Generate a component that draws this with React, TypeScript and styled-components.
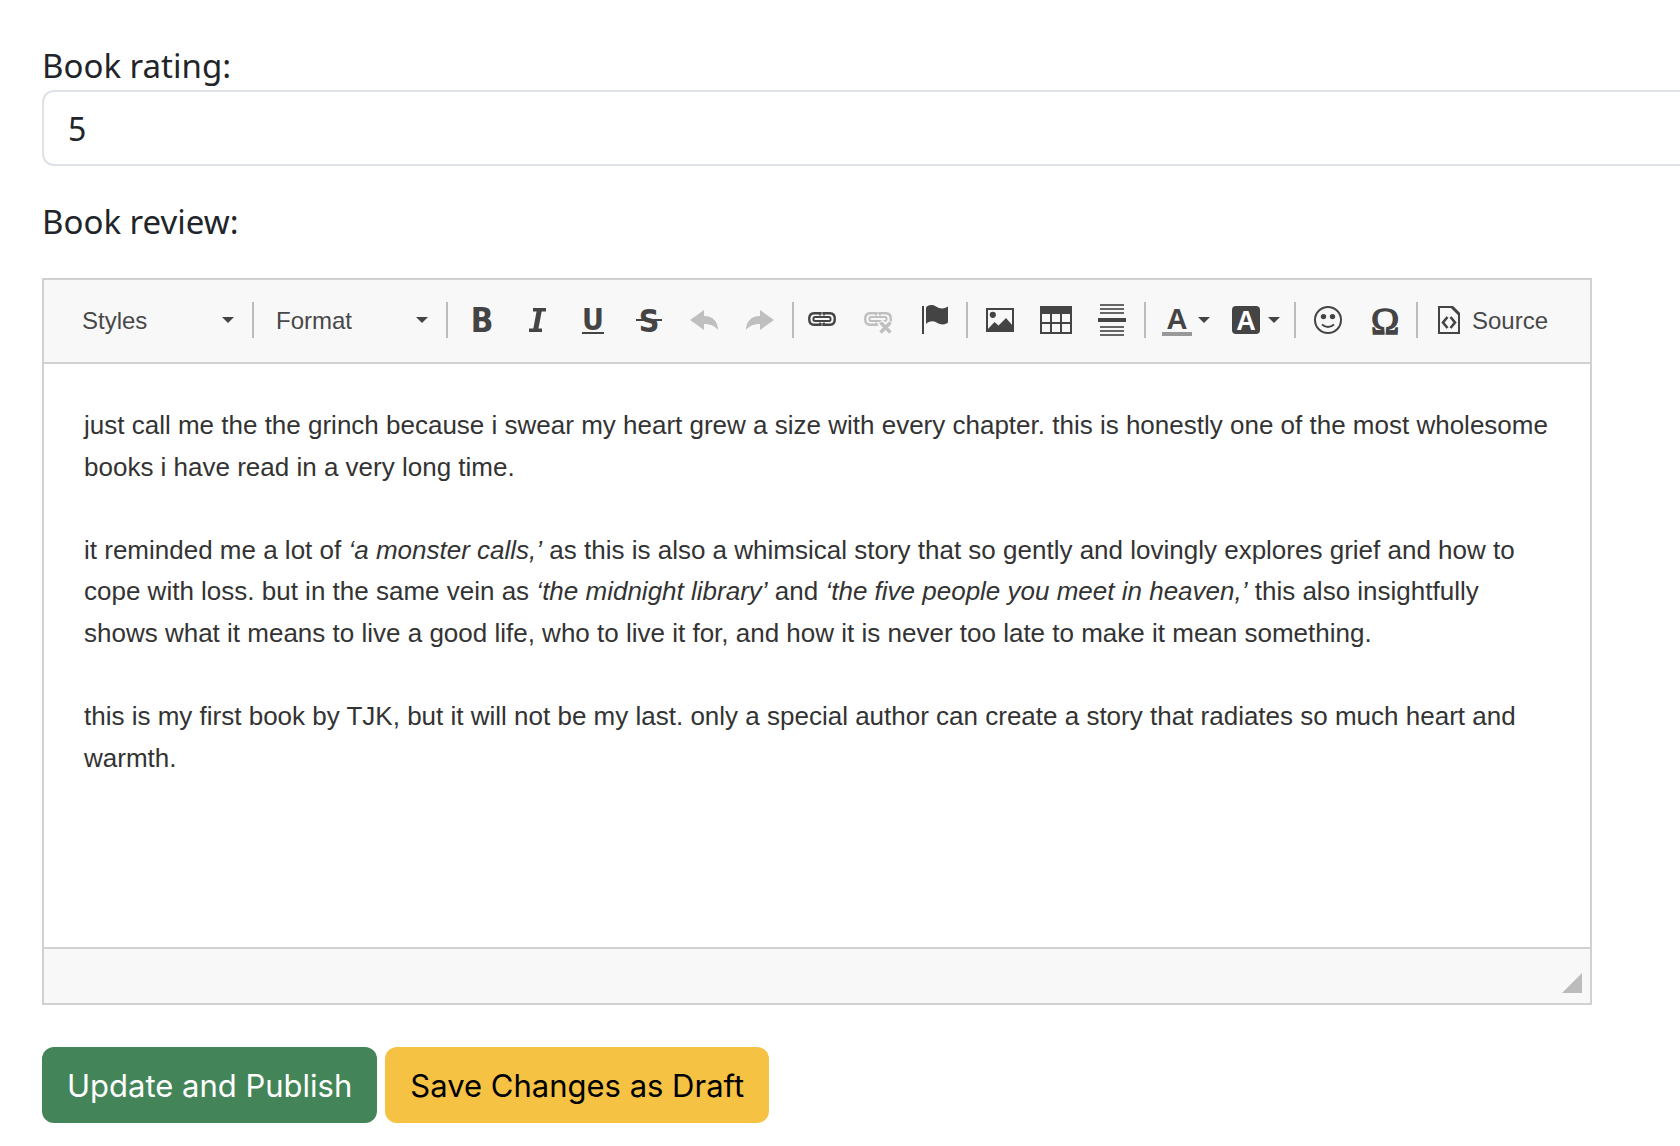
import React from 'react';
import styled, { createGlobalStyle } from 'styled-components';

const INK = '#444444';
const BAR = '#f8f8f8';
const LINE = '#d1d1d1';

const GlobalStyle = createGlobalStyle`
  * { box-sizing: border-box; }
  body { margin: 0; background: #ffffff; overflow-x: hidden; }
`;

const Page = styled.form`
  display: flex;
  flex-direction: column;
  padding: 42px 88px 24px 42px;
  color: #212529;
  font-family: 'Noto Sans', 'Open Sans', sans-serif;
  font-size: 32px;
`;

const Field = styled.div`
  display: flex;
  flex-direction: column;
  margin: 0 -112px 32px 0;
`;

const Label = styled.label`
  font-size: 33px;
  line-height: 48px;
`;

const TextInput = styled.input`
  height: 76px;
  padding: 12px 24px;
  border: 2px solid #dee2e6;
  border-radius: 12px;
  background: #ffffff;
  color: inherit;
  font: inherit;
  outline: none;
`;

const Editor = styled.section`
  display: flex;
  flex-direction: column;
  margin: 32px 0 42px;
  border: 2px solid ${LINE};
  font-family: 'Liberation Sans', Arial, sans-serif;
`;

const Toolbar = styled.div`
  display: flex;
  flex-wrap: wrap;
  align-items: center;
  padding: 12px 16px 14px;
  background: ${BAR};
  border-bottom: 2px solid ${LINE};
`;

const Separator = styled.span<{ $before?: number; $after?: number }>`
  width: 2px;
  height: 36px;
  margin-left: ${({ $before = 4 }) => $before}px;
  margin-right: ${({ $after = 4 }) => $after}px;
  background: #bcbcbc;
`;

const Combo = styled.div`
  display: grid;
  grid-template-columns: 1fr auto;
  align-items: center;
  width: 192px;
  padding-right: 18px;
`;

const ComboSelect = styled.select`
  grid-area: 1 / 1 / 2 / 3;
  height: 56px;
  padding: 0 0 0 22px;
  appearance: none;
  border: 0;
  background: transparent;
  color: #484848;
  font: 24px 'Liberation Sans', Arial, sans-serif;
  outline: none;
`;

const CaretSvg = styled.svg`
  grid-area: 1 / 2;
  width: 12px;
  height: 6px;
  flex: none;
  fill: ${INK};
  pointer-events: none;
`;

const ToolButton = styled.button<{ $menu?: boolean }>`
  display: flex;
  align-items: center;
  gap: 4px;
  height: 56px;
  padding: 0 ${({ $menu }) => ($menu ? 10 : 12)}px 0 12px;
  border: 0;
  background: transparent;
  color: #484848;
  font: 24px 'Liberation Sans', Arial, sans-serif;
`;

const Caption = styled.span`
  padding: 2px 0 0 2px;
`;

const Icon = styled.svg<{ $faded?: boolean }>`
  width: 32px;
  height: 32px;
  flex: none;
  overflow: visible;
  color: ${({ $faded }) => ($faded ? '#bfbfbf' : INK)};
`;

const Content = styled.div`
  min-height: 583px;
  padding: 41px 40px 0;
  color: #333333;
  font-size: 26px;
  line-height: 1.6;
  outline: none;
`;

const Paragraph = styled.p`
  margin: 0 0 1.6em;
`;

const StatusBar = styled.div`
  display: flex;
  justify-content: flex-end;
  align-items: flex-end;
  height: 56px;
  padding: 0 8px 10px;
  background: ${BAR};
  border-top: 2px solid ${LINE};
`;

const Grip = styled.svg`
  width: 20px;
  height: 20px;
  fill: #bcbcbc;
`;

const Actions = styled.div`
  display: flex;
  flex-wrap: wrap;
  gap: 8px;
`;

const ActionButton = styled.button<{ $bg: string; $fg: string }>`
  height: 76px;
  padding: 2px 25px 0;
  border: 0;
  border-radius: 12px;
  background: ${({ $bg }) => $bg};
  color: ${({ $fg }) => $fg};
  font: 31px/48px Inter, Roboto, sans-serif;
`;

const Caret = () => (
  <CaretSvg viewBox="0 0 12 6" aria-hidden="true">
    <path d="M0 0H12L6 6Z" />
  </CaretSvg>
);

type GlyphProps = {
  x: number;
  y: number;
  size: number;
  family?: string;
  fill?: string;
  weight?: number;
  outline?: number;
  children: string;
};

const Glyph = ({ x, y, size, family = 'DejaVu Sans Condensed', fill = 'currentColor', weight = 700, outline = 0, children }: GlyphProps) => (
  <text
    x={x}
    y={y}
    textAnchor="middle"
    fontFamily={`'${family}', 'Noto Sans', sans-serif`}
    fontWeight={weight}
    fontSize={size}
    fill={fill}
    stroke={fill}
    strokeWidth={outline}
  >
    {children}
  </text>
);

const Chain = () => (
  <g fill="none" stroke="currentColor">
    <path d="M14.5 10.5V9.2H8Q3.2 9.2 3.2 15Q3.2 20.8 8 20.8H14.5V19M17.5 10.5V9.2H24Q28.8 9.2 28.8 15Q28.8 20.8 24 20.8H17.5V19" strokeWidth="2.4" />
    <rect x="7.5" y="13" width="17" height="4" rx="1.5" strokeWidth="2" />
    <path d="M14 11.5V10M18 11.5V10M14 20V18.5M18 20V18.5" strokeWidth="1.6" />
  </g>
);

const glyphs: Record<string, React.ReactNode> = {
  Bold: <Glyph x={18} y={28} size={33}>B</Glyph>,
  Italic: (
    <g fill="none" stroke="currentColor">
      <path d="M13 5.8H26M9 26.2H22" strokeWidth="3.6" />
      <path d="M19.6 5L15.4 27" strokeWidth="5" />
    </g>
  ),
  Underline: (
    <>
      <Glyph x={17} y={26} size={30}>U</Glyph>
      <path d="M6 28H28V30H6Z" fill="currentColor" />
    </>
  ),
  Strikethrough: (
    <>
      <Glyph x={17} y={28} size={32}>S</Glyph>
      <path d="M4 15H30V17H4Z" fill="currentColor" />
    </>
  ),
  Undo: <path d="M2 16L16 6V12C25 12 30 18 30 26C27 22 22 20 16 20V26Z" fill="currentColor" />,
  Redo: <path d="M30 16L16 6V12C7 12 2 18 2 26C5 22 10 20 16 20V26Z" fill="currentColor" />,
  Link: <Chain />,
  Unlink: (
    <>
      <Chain />
      <path d="M18 18L29 29M29 18L18 29" stroke={BAR} strokeWidth="7" />
      <path d="M18.5 18.5L28.5 28.5M28.5 18.5L18.5 28.5" stroke="currentColor" strokeWidth="3.4" />
    </>
  ),
  Anchor: <path d="M4 2H6V30H4ZM8 3.5C11 .5 14 .5 18 2.5C22 5 26 5 30 2.5V18.5C27 21 23 21 19 18.8C15 16.5 11 17 8 20Z" fill="currentColor" />,
  Image: (
    <>
      <rect x="3" y="5" width="26" height="22" fill="none" stroke="currentColor" strokeWidth="2" />
      <circle cx="8.8" cy="10.8" r="3.1" fill="currentColor" />
      <path d="M3 26L10.5 18L14.5 21.5L22 14L29 22V27H3Z" fill="currentColor" />
    </>
  ),
  Table: (
    <path
      fill="currentColor"
      fillRule="evenodd"
      d="M0 2H32V30H0ZM2 10V18H10V10ZM12 10V18H20V10ZM22 10V18H30V10ZM2 20V28H10V20ZM12 20V28H20V20ZM22 20V28H30V20Z"
    />
  ),
  'Horizontal line': (
    <>
      <path d="M4 1H28M4 5H28M4 9H28M4 23H28M4 27H28M4 31H28" stroke="#666666" strokeWidth="2" />
      <path d="M2 16H30" stroke="currentColor" strokeWidth="4" />
    </>
  ),
  'Text color': (
    <>
      <Glyph x={15} y={25} size={29} family="Liberation Sans">A</Glyph>
      <path d="M0 28H30V32H0Z" fill="#999999" />
    </>
  ),
  'Background color': (
    <>
      <rect x="0" y="2" width="28" height="28" rx="4" fill="currentColor" />
      <Glyph x={14} y={26} size={27} family="Liberation Sans" fill="#ffffff">A</Glyph>
    </>
  ),
  Smiley: (
    <>
      <circle cx="16" cy="16" r="13" fill="none" stroke="currentColor" strokeWidth="2" />
      <circle cx="11.5" cy="12.6" r="2.7" fill="currentColor" />
      <circle cx="20.5" cy="12.6" r="2.7" fill="currentColor" />
      <path d="M10 20.5Q16 25.5 22 20.5" fill="none" stroke="currentColor" strokeWidth="2" />
    </>
  ),
  'Special character': (
    <Glyph x={17} y={30} size={38} family="Liberation Serif" weight={400} outline={1.4}>Ω</Glyph>
  ),
  Source: (
    <g fill="none" stroke="currentColor">
      <path d="M5 3H18L25 10V29H5Z" strokeWidth="2" />
      <path d="M18 3L25 10" strokeWidth="3" />
      <path d="M13.5 13L9 18.5L13.5 24M16.5 13L21 18.5L16.5 24" strokeWidth="2.6" />
    </g>
  ),
};

type ToolProps = { name: string; menu?: boolean; faded?: boolean; caption?: string };

const Tool = ({ name, menu, faded, caption }: ToolProps) => (
  <ToolButton type="button" aria-label={name} $menu={menu} disabled={faded}>
    <Icon viewBox="0 0 32 32" aria-hidden="true" $faded={faded}>
      {glyphs[name]}
    </Icon>
    {caption && <Caption>{caption}</Caption>}
    {menu && <Caret />}
  </ToolButton>
);

const Dropdown = ({ name }: { name: string }) => (
  <Combo>
    <ComboSelect aria-label={name} defaultValue={name}>
      <option>{name}</option>
    </ComboSelect>
    <Caret />
  </Combo>
);

export default function App() {
  return (
    <>
      <GlobalStyle />
      <Page onSubmit={(event) => event.preventDefault()}>
        <Field>
          <Label htmlFor="rating">Book rating:</Label>
          <TextInput id="rating" defaultValue="5" />
        </Field>
        <Label as="div" id="review-label">Book review:</Label>
        <Editor>
          <Toolbar role="toolbar" aria-label="Formatting">
            <Dropdown name="Styles" />
            <Separator $before={0} $after={0} />
            <Dropdown name="Format" />
            <Separator $before={0} />
            <Tool name="Bold" />
            <Tool name="Italic" />
            <Tool name="Underline" />
            <Tool name="Strikethrough" />
            <Tool name="Undo" faded />
            <Tool name="Redo" faded />
            <Separator $after={0} />
            <Tool name="Link" />
            <Tool name="Unlink" faded />
            <Tool name="Anchor" />
            <Separator />
            <Tool name="Image" />
            <Tool name="Table" />
            <Tool name="Horizontal line" />
            <Separator />
            <Tool name="Text color" menu />
            <Tool name="Background color" menu />
            <Separator />
            <Tool name="Smiley" />
            <Tool name="Special character" />
            <Separator />
            <Tool name="Source" caption="Source" />
          </Toolbar>
          <Content role="textbox" aria-multiline="true" aria-labelledby="review-label" contentEditable suppressContentEditableWarning spellCheck={false}>
            <Paragraph>
              just call me the the grinch because i swear my heart grew a size with every chapter. this is honestly one of
              the most wholesome books i have read in a very long time.
            </Paragraph>
            <Paragraph>
              it reminded me a lot of <em>‘a monster calls,’</em> as this is also a whimsical story that so gently and
              lovingly explores grief and how to cope with loss. but in the same vein as <em>‘the midnight library’</em>{' '}
              and <em>‘the five people you meet in heaven,’</em> this also insightfully shows what it means to live a
              good life, who to live it for, and how it is never too late to make it mean something.
            </Paragraph>
            <Paragraph>
              this is my first book by TJK, but it will not be my last. only a special author can create a story that
              radiates so much heart and warmth.
            </Paragraph>
          </Content>
          <StatusBar>
            <Grip viewBox="0 0 20 20" aria-hidden="true">
              <path d="M20 0V20H0Z" />
            </Grip>
          </StatusBar>
        </Editor>
        <Actions>
          <ActionButton type="submit" $bg="#438558" $fg="#ffffff">Update and Publish</ActionButton>
          <ActionButton type="button" $bg="#f5c244" $fg="#000000">Save Changes as Draft</ActionButton>
        </Actions>
      </Page>
    </>
  );
}
